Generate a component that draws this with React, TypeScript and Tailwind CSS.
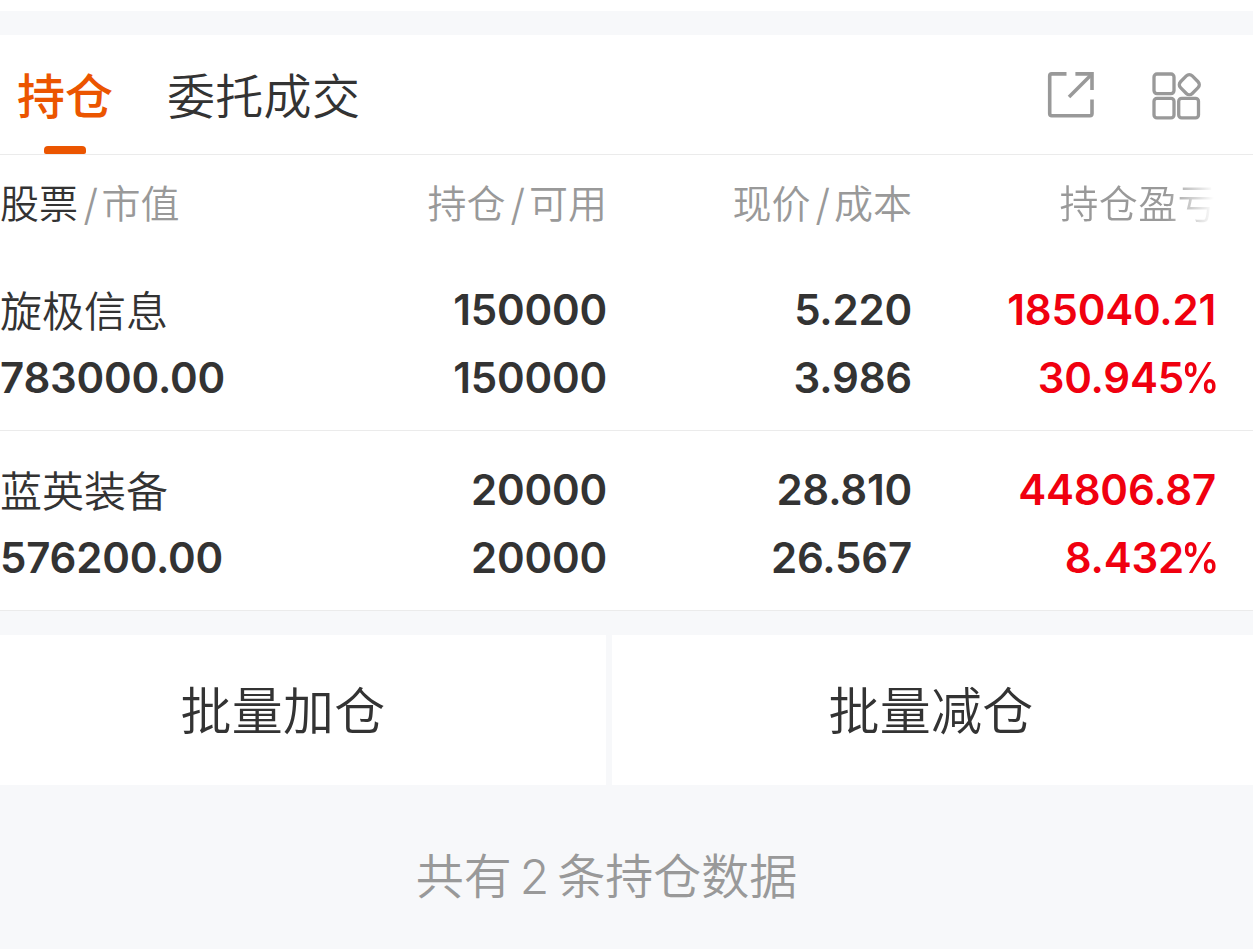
import React from "react";

const holdings = [
  {
    name: "旋极信息",
    value: "783000.00",
    amount: "150000",
    available: "150000",
    price: "5.220",
    cost: "3.986",
    profit: "185040.21",
    rate: "30.945",
  },
  {
    name: "蓝英装备",
    value: "576200.00",
    amount: "20000",
    available: "20000",
    price: "28.810",
    cost: "26.567",
    profit: "44806.87",
    rate: "8.432",
  },
];

const grid = "grid grid-cols-[302px_305px_305px_305px]";

function ShareIcon() {
  return (
    <svg width="48" height="48" viewBox="0 0 48 48" fill="none" stroke="#999" strokeWidth="3.6">
      <path d="M19.5 2.9H4.8Q2.7 2.9 2.7 5V42.5Q2.7 44.7 4.8 44.7H43Q45 44.7 45 42.5V28.5" />
      <path d="M28.4 2.9H45V19" />
      <path d="M44.5 3.4L22 26" />
    </svg>
  );
}

function GridIcon() {
  return (
    <svg width="52" height="50" viewBox="0 0 52 50" fill="none" stroke="#999" strokeWidth="3.3">
      <rect x="4" y="3" width="20" height="19.6" rx="3" />
      <rect x="4" y="27.3" width="20" height="19.6" rx="3" />
      <rect x="28.7" y="27.3" width="19.8" height="19.6" rx="3" />
      <rect x="31" y="5.4" width="16.6" height="16.6" rx="4.2" transform="rotate(45 39.3 13.7)" />
    </svg>
  );
}

function Slash() {
  return <span className="mr-[4px] ml-[6px] inline-block origin-center translate-y-px scale-110">/</span>;
}

export default function App() {
  return (
    <div className="h-[949px] w-[1253px] overflow-hidden bg-[#f7f8fa] pt-[11px] font-['Inter','Noto_Sans_CJK_SC',sans-serif] text-[#333] shadow-[inset_0_11px_0_#fff]">
      {/* Tabs */}
      <div className="mt-6 flex h-[120px] items-start justify-between border-b border-[#ebebeb] bg-white pr-[51px] pl-[17px]">
        <div className="flex gap-[54px] text-[48px] leading-[123px]">
          <div className="relative h-[119px] font-medium text-[#eb5500]">
            持仓
            <span className="absolute bottom-0 left-[26.5px] h-2 w-[42px] rounded-t-[4px] rounded-b-[2px] bg-[#eb5500]" />
          </div>
          <div className="font-[350] tracking-[0.3px]">委托成交</div>
        </div>
        <div className="flex gap-[55px] pt-9">
          <ShareIcon />
          <GridIcon />
        </div>
      </div>

      {/* Column titles */}
      <div className={`${grid} h-[96px] bg-white text-right text-[39px] leading-[98px] font-[350] text-[#999]`}>
        <div className="text-left">
          <span className="text-[#333]">股票</span>
          <Slash />市值
        </div>
        <div>持仓<Slash />可用</div>
        <div>现价<Slash />成本</div>
        <div>
          <span className="bg-linear-to-r from-[#999] from-68% to-white to-98% bg-clip-text tracking-[0.4px] text-transparent">持仓盈亏</span>
        </div>
      </div>

      {holdings.map((h) => (
        <div
          key={h.name}
          className={`${grid} h-[180px] border-b border-[#ebebeb] bg-white pt-[26px] text-right text-[42px] leading-[66px] font-[570] tracking-[-0.2px]`}
        >
          <div className="text-left">
            <div className="h-[68px] leading-[70px] font-[350] tracking-normal">{h.name}</div>
            <div className="h-[68px]">{h.value}</div>
          </div>
          <div>
            <div className="h-[68px]">{h.amount}</div>
            <div className="h-[68px]">{h.available}</div>
          </div>
          <div>
            <div className="h-[68px]">{h.price}</div>
            <div className="h-[68px]">{h.cost}</div>
          </div>
          <div className="text-[#f0000f]">
            <div className="h-[68px] pr-px">{h.profit}</div>
            <div className="h-[68px]">
              {h.rate}
              <span className="-mr-[2px] -ml-[7px] inline-block origin-right scale-x-90">%</span>
            </div>
          </div>
        </div>
      ))}

      {/* Batch actions */}
      <div className="mt-6 flex h-[150px] gap-1.5 text-[51px] font-[350] tracking-[0.3px]">
        <button className="w-[606px] bg-white pt-[5px] pr-10">批量加仓</button>
        <button className="flex-1 bg-white pt-[5px] pr-[3px]">批量减仓</button>
      </div>

      <div className="pr-10 text-center text-[48px] leading-[184px] font-[350] text-[#999]">
        共有<span className="mx-2">2</span>条持仓数据
      </div>
    </div>
  );
}
